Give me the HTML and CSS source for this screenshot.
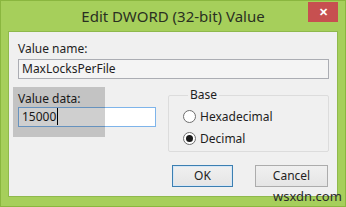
FILE: index.html
```html
<!DOCTYPE html>
<html lang="en">
<head>
	<title>Edit DWORD (32-bit) Value</title>
	<meta charset="utf-8">
<link rel="stylesheet" href="styles.css">
</head>
<body>
<div class="window">
	<div class="titlebar">
		<span class="title">Edit DWORD (32-bit) Value</span>
		<span class="close">&#x2715;</span>
	</div>
	<div class="client">
		<div class="lbl">Value name:</div>
		<div class="edit name">MaxLocksPerFile</div>
		<div class="middle">
			<div class="datacol">
				<div class="lbl">Value data:</div>
				<div class="edit data"><span class="caret">15000</span></div>
			</div>
			<fieldset class="base">
				<legend>Base</legend>
				<div class="radio"><span class="dot"></span>Hexadecimal</div>
				<div class="radio"><span class="dot on"></span>Decimal</div>
			</fieldset>
		</div>
		<div class="buttons">
			<span class="btn ok">OK</span>
			<span class="btn cancel">Cancel</span>
		</div>
		<div class="shade"></div>
	</div>
	<div class="mark">wsxdn.com</div>
</div>
</body>
</html>
```

FILE: styles.css
```css
	body {
		margin: 0;
		font-family: "Noto Sans", "Open Sans", sans-serif;
		font-size: 12px;
		color: #1e1e1e;
	}
	.window {
		position: relative;
		box-sizing: border-box;
		width: 346px;
		height: 207px;
		background-color: #a6cf5b;
		border: 1px solid #8ab63f;
		padding: 0 7px 9px 7px;
		display: flex;
		flex-direction: column;
	}
	.titlebar {
		height: 30px;
		margin: 0 -7px;
		display: grid;
		grid-template-columns: 1fr auto 1fr;
	}
	.title {
		grid-column: 2;
		align-self: center;
		font-size: 15px;
		color: #2a2f22;
		margin-top: -1px;
	}
	.close {
		grid-column: 3;
		justify-self: end;
		width: 30px;
		height: 20px;
		margin: 1px 7px 0 0;
		background-color: #c75050;
		color: #fff;
		font-size: 11px;
		font-weight: bold;
		line-height: 20px;
		text-align: center;
	}
	.client {
		position: relative;
		flex: 1;
		background-color: #f0f0f0;
		border: 1px solid #8fb94c;
		padding: 9px 8px 0 9px;
	}
	.lbl {
		height: 16px;
		line-height: 16px;
	}
	.edit {
		box-sizing: border-box;
		height: 20px;
		line-height: 18px;
		padding-left: 3px;
		border: 1px solid #abadb3;
	}
	.name {
		margin-top: 2px;
		background-color: #f4f4f4;
	}
	.middle {
		display: flex;
		margin-top: 8px;
	}
	.datacol {
		padding-top: 4px;
	}
	.data {
		width: 138px;
		background-color: #fff;
		border-color: #7eb4ea;
	}
	.caret {
		border-right: 1px solid #000;
		padding-right: 1px;
	}
	.base {
		box-sizing: border-box;
		width: 162px;
		height: 64px;
		margin: 1px 0 0 12px;
		padding: 3px 0 0 14px;
		border: 1px solid #dcdcdc;
		border-radius: 2px;
	}
	.base legend {
		padding: 0 2px;
		margin-left: 5px;
		line-height: 14px;
	}
	.radio {
		display: flex;
		align-items: center;
		height: 22px;
	}
	.dot {
		box-sizing: border-box;
		width: 13px;
		height: 13px;
		margin-right: 4px;
		border: 1px solid #6e6e6e;
		border-radius: 50%;
		background: #fff;
		position: relative;
	}
	.dot.on::after {
		content: "";
		position: absolute;
		left: 2px;
		top: 2px;
		width: 7px;
		height: 7px;
		border-radius: 50%;
		background: #1a1a1a;
	}
	.buttons {
		display: flex;
		margin: 13px 0 0 154px;
		gap: 22px;
	}
	.btn {
		box-sizing: border-box;
		height: 22px;
		line-height: 20px;
		text-align: center;
		border: 1px solid #acacac;
		background: linear-gradient(#f0f0f0, #e5e5e5);
	}
	.ok {
		width: 61px;
		border-color: #3c7fb1;
		box-shadow: inset 0 0 0 1px #d5e7f7;
	}
	.cancel {
		width: 73px;
	}
	.shade {
		position: absolute;
		left: 4px;
		top: 55px;
		width: 92px;
		height: 50px;
		background: rgba(0, 0, 0, 0.19);
	}
	.mark {
		position: absolute;
		left: 272px;
		top: 186px;
		font-size: 13px;
		color: #2b2b2b;
	}
```
